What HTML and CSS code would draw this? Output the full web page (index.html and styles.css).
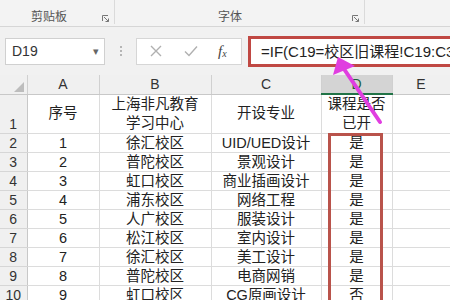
FILE: index.html
```html
<!DOCTYPE html>
<html lang="zh-CN">
<head>
  <meta charset="UTF-8">
  <title>课程表</title>
  <link rel="stylesheet" href="styles.css">
</head>
<body>
  <div class="ribbon">
    <div class="group group-clip">
      <span class="group-label">剪贴板</span>
      <svg class="launcher" width="7" height="7" viewBox="0 0 7 7"><path d="M0.5 6V0.5H6M2 2L6.5 6.5M6.5 3.5V6.5H3.5" fill="none" stroke="#777" stroke-width="1"/></svg>
    </div>
    <div class="group group-font">
      <span class="group-label">字体</span>
      <svg class="launcher" width="7" height="7" viewBox="0 0 7 7"><path d="M0.5 6V0.5H6M2 2L6.5 6.5M6.5 3.5V6.5H3.5" fill="none" stroke="#777" stroke-width="1"/></svg>
    </div>
  </div>

  <div class="formula-bar">
    <div class="name-box">
      <span>D19</span>
      <span class="drop">&#9662;</span>
    </div>
    <div class="grip"><i></i><i></i><i></i></div>
    <div class="fx-buttons">
      <svg width="12" height="12" viewBox="0 0 12 12"><path d="M1 1L11 11M11 1L1 11" stroke="#b0b0b0" stroke-width="1.4"/></svg>
      <svg width="14" height="12" viewBox="0 0 14 12"><path d="M1 6.5L5 10.5L13 1.5" fill="none" stroke="#b0b0b0" stroke-width="1.4"/></svg>
      <span class="fx"><i>f</i><sub>x</sub></span>
    </div>
    <div class="formula-input">=IF(C19=校区旧课程!C19:C36</div>
  </div>

  <div class="sheet">
    <table class="grid">
      <colgroup>
        <col class="c-rh"><col class="c-a"><col class="c-b"><col class="c-c"><col class="c-d"><col class="c-e">
      </colgroup>
      <thead>
        <tr>
          <th class="corner"><span class="tri"></span></th>
          <th>A</th><th>B</th><th>C</th><th class="sel">D</th><th>E</th>
        </tr>
      </thead>
      <tbody>
        <tr class="tall">
          <th class="rh">1</th>
          <td>序号</td><td>上海非凡教育<br>学习中心</td><td>开设专业</td><td>课程是否<br>已开</td><td></td>
        </tr>
        <tr><th class="rh">2</th><td>1</td><td>徐汇校区</td><td>UID/UED设计</td><td>是</td><td></td></tr>
        <tr><th class="rh">3</th><td>2</td><td>普陀校区</td><td>景观设计</td><td>是</td><td></td></tr>
        <tr><th class="rh">4</th><td>3</td><td>虹口校区</td><td>商业插画设计</td><td>是</td><td></td></tr>
        <tr><th class="rh">5</th><td>4</td><td>浦东校区</td><td>网络工程</td><td>是</td><td></td></tr>
        <tr><th class="rh">6</th><td>5</td><td>人广校区</td><td>服装设计</td><td>是</td><td></td></tr>
        <tr><th class="rh">7</th><td>6</td><td>松江校区</td><td>室内设计</td><td>是</td><td></td></tr>
        <tr><th class="rh">8</th><td>7</td><td>徐汇校区</td><td>美工设计</td><td>是</td><td></td></tr>
        <tr><th class="rh">9</th><td>8</td><td>普陀校区</td><td>电商网销</td><td>是</td><td></td></tr>
        <tr><th class="rh">10</th><td>9</td><td>虹口校区</td><td>CG原画设计</td><td>否</td><td></td></tr>
      </tbody>
    </table>
    <div class="mark-box"></div>
  </div>

  <svg class="arrow" width="450" height="300" viewBox="0 0 450 300">
    <line x1="380" y1="122" x2="344" y2="69" stroke="#e03ee0" stroke-width="4" stroke-linecap="round"/>
    <polygon points="338,57 333,75 355,66" fill="#e03ee0"/>
  </svg>
</body>
</html>
```

FILE: styles.css
```css
html, body {
  margin: 0;
  padding: 0;
  width: 450px;
  height: 300px;
  overflow: hidden;
  background: #fff;
  font-family: "Liberation Sans", "Noto Sans CJK SC", sans-serif;
  color: #222;
}
.ribbon {
  display: flex;
  height: 26px;
  background: #f3f3f3;
  border-bottom: 1px solid #d6d6d6;
}
.group {
  display: flex;
  align-items: center;
  border-right: 1px solid #dadada;
  height: 24px;
}
.group-clip {
  width: 114px;
}
.group-clip .group-label {
  margin-left: 31px;
}
.group-font {
  width: 249px;
}
.group-font .group-label {
  margin-left: 103px;
}
.group-label {
  font-size: 12px;
  color: #555;
  padding-top: 6px;
}
.launcher {
  margin-left: auto;
  margin-right: 5px;
  margin-top: 12px;
}
.formula-bar {
  display: flex;
  align-items: center;
  height: 48px;
  background: #f1f1f1;
  padding-left: 5px;
  box-sizing: border-box;
}
.formula-bar > * {
  flex: none;
}
.name-box {
  display: flex;
  align-items: center;
  justify-content: space-between;
  box-sizing: border-box;
  width: 100px;
  height: 27px;
  background: #fff;
  border: 1px solid #d0d0d0;
  padding: 0 5px 0 6px;
  font-size: 14px;
  color: #333;
}
.drop {
  font-size: 11px;
  color: #666;
}
.grip {
  display: flex;
  flex-direction: column;
  gap: 2px;
  margin: 0 14px 0 15px;
}
.grip i {
  display: block;
  width: 2px;
  height: 2px;
  background: #b5b5b5;
}
.fx-buttons {
  display: flex;
  align-items: center;
  box-sizing: border-box;
  width: 106px;
  height: 27px;
  background: #fff;
  border: 1px solid #d6d6d6;
  padding-left: 13px;
  gap: 22px;
}
.fx {
  font-family: "Liberation Serif", serif;
  font-size: 15px;
  color: #444;
  margin-left: -2px;
}
.fx sub {
  font-size: 10px;
  font-style: italic;
  vertical-align: -1px;
}
.formula-input {
  box-sizing: border-box;
  width: 230px;
  height: 31px;
  margin-left: 6px;
  border: 3px solid #c04843;
  background: #fff;
  padding-left: 10px;
  font-size: 15px;
  line-height: 25px;
  white-space: nowrap;
  overflow: hidden;
  color: #222;
}
.sheet {
  position: relative;
}
.grid {
  table-layout: fixed;
  border-collapse: collapse;
  width: 450px;
  font-size: 14.5px;
}
.c-rh { width: 27px; }
.c-a { width: 72px; }
.c-b { width: 112px; }
.c-c { width: 110px; }
.c-d { width: 71px; }
.c-e { width: 58px; }
.grid thead th {
  height: 18px;
  padding: 0;
  background: #f0f0f0;
  border-right: 1px solid #d0d0d0;
  border-bottom: 1px solid #c8c8c8;
  font-weight: normal;
  font-size: 14px;
  color: #333;
  line-height: 17px;
}
.grid thead th.sel {
  background: #d4d4d4;
  border-bottom: 2px solid #217346;
  color: #1f5f3a;
}
.corner {
  position: relative;
}
.tri {
  position: absolute;
  right: 3px;
  bottom: 2px;
  width: 0;
  height: 0;
  border-left: 10px solid transparent;
  border-bottom: 10px solid #bdbdbd;
}
.grid td {
  height: 18px;
  padding: 0;
  text-align: center;
  border-right: 1px solid #dcdcdc;
  border-bottom: 1px solid #dcdcdc;
  line-height: 18px;
  white-space: nowrap;
  overflow: hidden;
}
.grid .rh {
  padding: 0;
  background: #f0f0f0;
  border-right: 1px solid #c8c8c8;
  border-bottom: 1px solid #d6d6d6;
  font-weight: normal;
  font-size: 14px;
  color: #333;
  text-align: center;
  line-height: 18px;
}
.grid tr.tall td,
.grid tr.tall th {
  height: 37px;
}
.grid tr.tall td {
  line-height: 19px;
}
.grid tr.tall .rh {
  vertical-align: bottom;
}
.mark-box {
  position: absolute;
  left: 328px;
  top: 58px;
  width: 55px;
  height: 200px;
  box-sizing: border-box;
  border: 3px solid #b9534b;
}
.arrow {
  position: absolute;
  left: 0;
  top: 0;
  pointer-events: none;
}
```
